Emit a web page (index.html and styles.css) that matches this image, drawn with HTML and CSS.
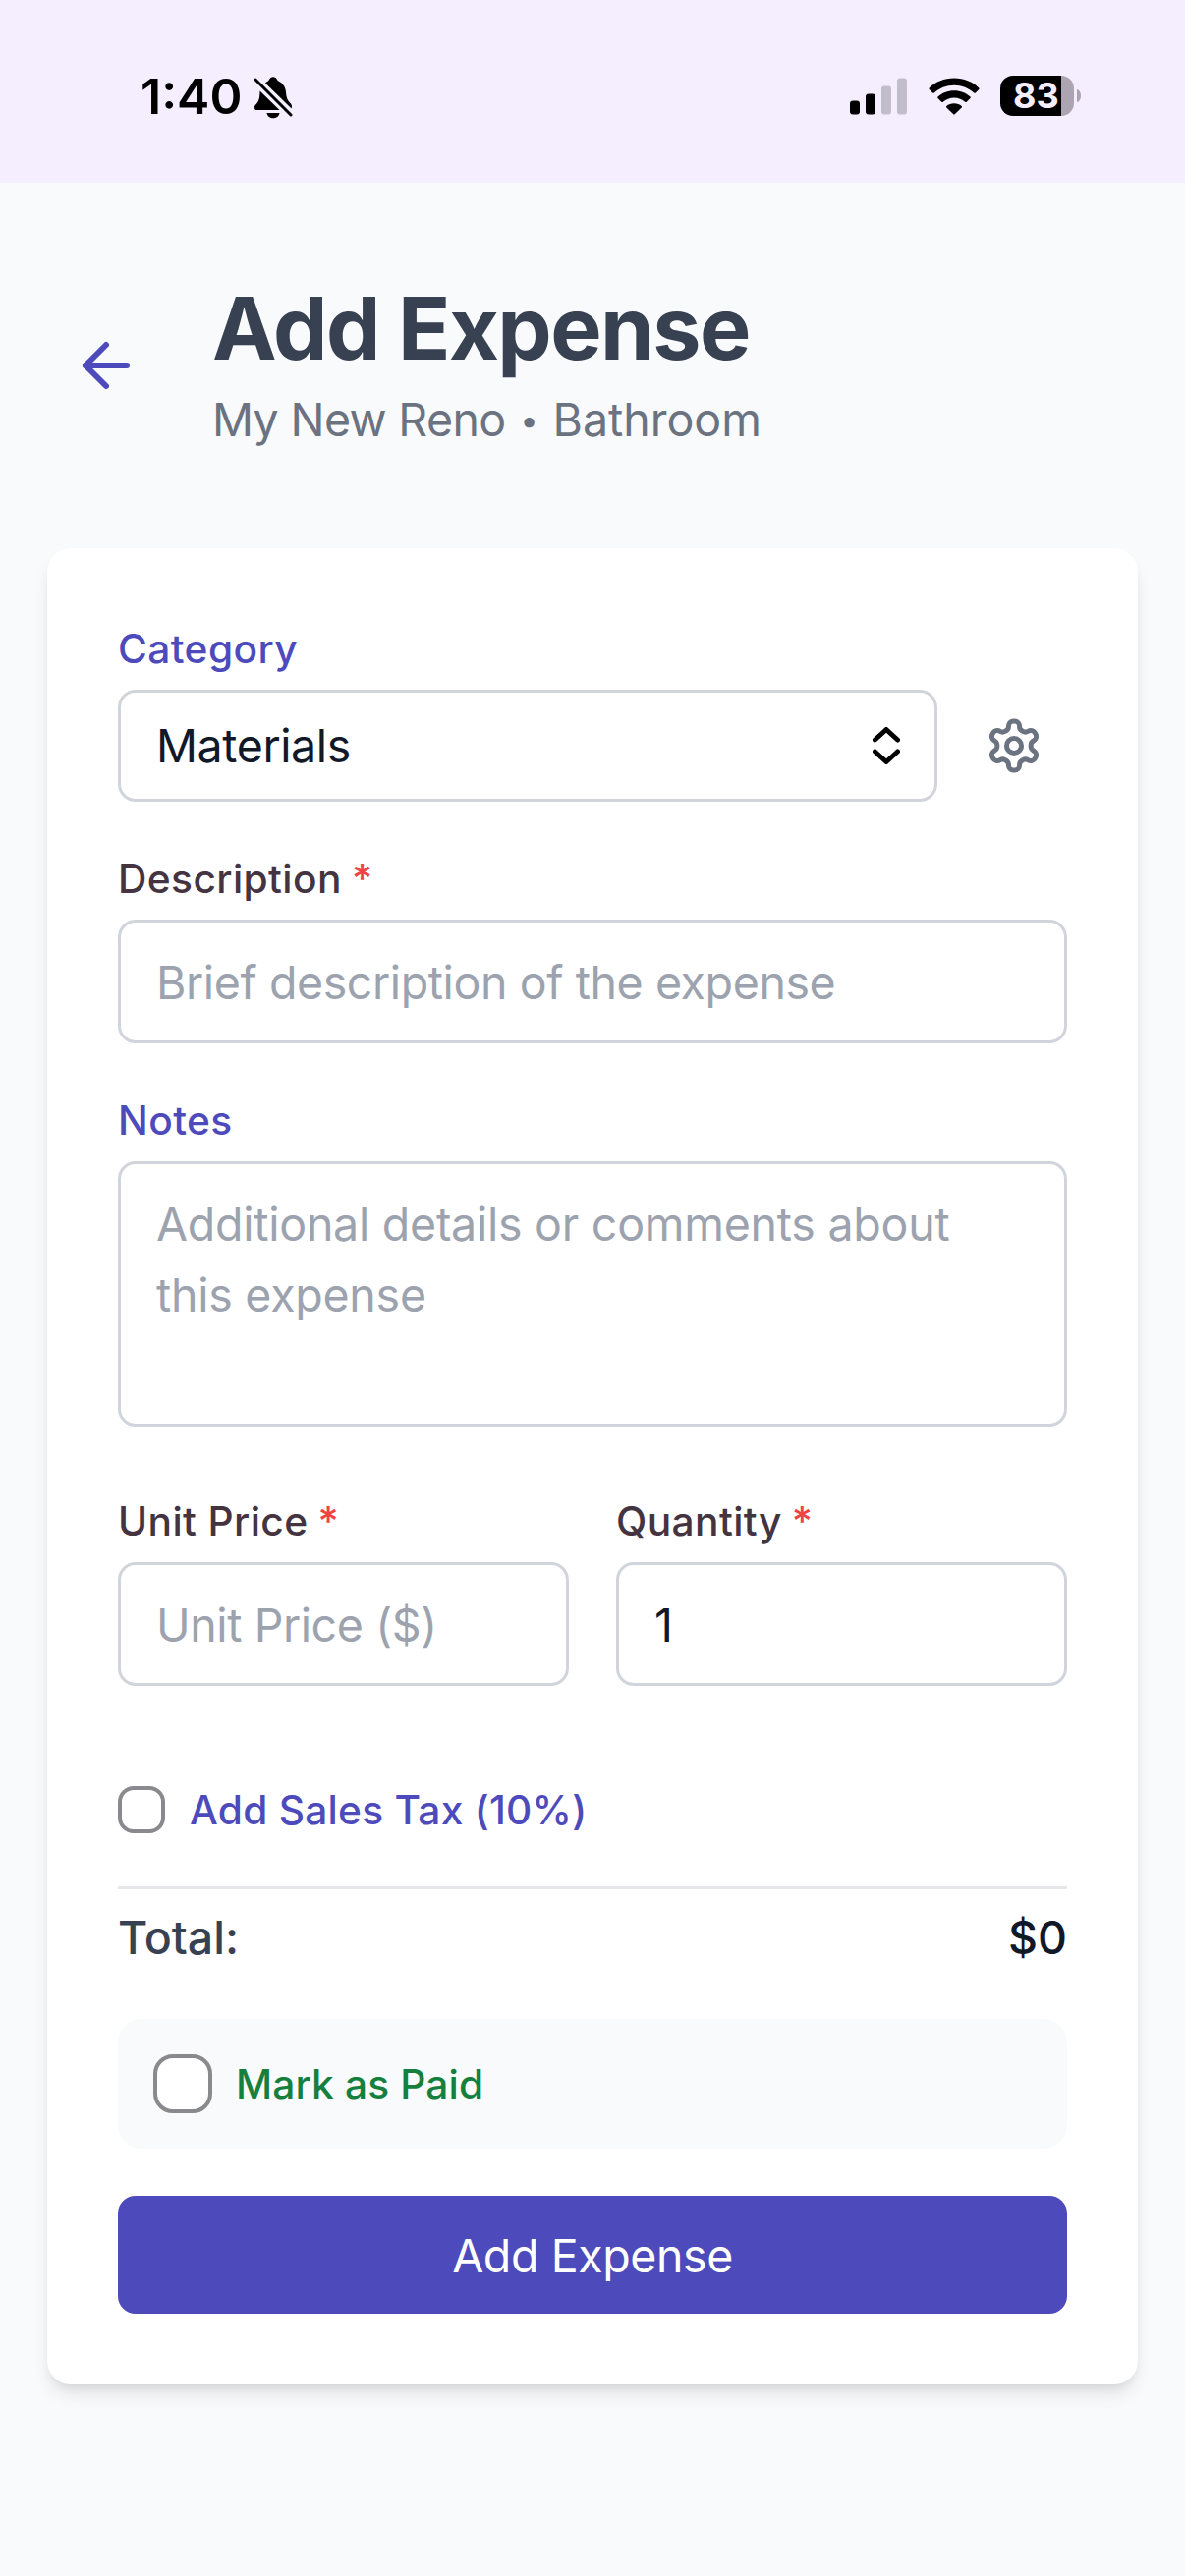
FILE: index.html
```html
<!DOCTYPE html>
<html lang="en">
<head>
<meta charset="utf-8">
<title>Add Expense</title>
<link rel="stylesheet" href="styles.css">
</head>
<body>
<div class="status-bar">
  <div class="status-left">
    <span class="clock">1:40</span>
    <svg class="bell" viewBox="0 0 40 44" width="40" height="44">
      <path d="M6.5 15.5 26.5 35H3.5C.6 35 .2 31.300 2 29.700C5 27 6.500 24 6.500 15.500Z"/>
      <path d="M12 7.500C14.500 5.500 15 5.800 16 4C17.500.4 22.500.4 24 4C24.600 5.500 26 5.600 28 7C34 12 32.500 17 33.800 22C34.500 25 36.300 27 38 28.500C39.200 30 39.200 31.500 38.700 33.500Z"/>
      <path d="M13.500 38H26.500C25.500 45 14.500 45 13.500 38Z"/>
      <path class="slash" d="M2 4 38 40"/>
    </svg>
  </div>
  <div class="status-right">
    <svg class="signal" viewBox="0 0 58 38" width="58" height="38">
      <rect x="0" y="23.500" width="10" height="14" rx="3"/>
      <rect x="16" y="16.500" width="10" height="21" rx="3"/>
      <rect class="dim" x="32" y="8.500" width="10" height="29" rx="3"/>
      <rect class="dim" x="48" y=".5" width="10" height="37" rx="3"/>
    </svg>
    <svg class="wifi" viewBox="0 0 52 38" width="52" height="38">
      <path d="M26 .5C36 .5 45 4.300 51.300 10.500Q52 11.200 51.300 12L47.800 15.500Q47 16.200 46.200 15.500C40.800 10.500 33.800 7.700 26 7.700C18.200 7.700 11.200 10.500 5.800 15.500Q5 16.200 4.200 15.500L.7 12Q0 11.200.7 10.500C7 4.300 16 .5 26 .5Z"/>
      <path d="M26 13.200C32.500 13.200 38.300 15.600 42.500 19.500Q43.200 20.200 42.500 21L38.700 24.700Q38 25.300 37.200 24.700C34.200 22 30.300 20.400 26 20.400C21.700 20.400 17.800 22 14.800 24.700Q14 25.300 13.300 24.700L9.500 21Q8.800 20.200 9.500 19.500C13.700 15.600 19.500 13.200 26 13.200Z"/>
      <path d="M26 26.200C29 26.200 31.700 27.200 33.700 29Q34.400 29.700 33.700 30.400L26.700 37.200Q26 37.900 25.300 37.200L18.300 30.400Q17.600 29.700 18.300 29C20.300 27.200 23 26.200 26 26.200Z"/>
    </svg>
    <div class="battery"><span class="battery-level">83</span></div>
    <div class="battery-cap"></div>
  </div>
</div>

<header class="page-header">
  <svg class="back" viewBox="0 0 24 24" width="72" height="72"><path d="m12 19-7-7 7-7"/><path d="M19 12H5"/></svg>
  <div class="headings">
    <h1 class="title">Add Expense</h1>
    <p class="subtitle"><span class="project">My New Reno</span> <span class="dot">•</span> <span>Bathroom</span></p>
  </div>
</header>

<main class="card">
  <section class="field">
    <div class="label accent"><span>Category</span></div>
    <div class="select-row">
      <div class="control select">
        <span>Materials</span>
        <svg class="chevrons" viewBox="0 0 28 38" width="28" height="38"><path d="M2.500 13 14 2.500 25.500 13M2.500 25 14 35.500 25.500 25"/></svg>
      </div>
      <svg class="gear" viewBox="0 0 24 24" width="60" height="60"><path d="M12.220 2h-.44a2 2 0 0 0-2 2v.18a2 2 0 0 1-1 1.730l-.43.25a2 2 0 0 1-2 0l-.15-.08a2 2 0 0 0-2.730.73l-.22.38a2 2 0 0 0 .73 2.730l.15.1a2 2 0 0 1 1 1.720v.51a2 2 0 0 1-1 1.740l-.15.09a2 2 0 0 0-.73 2.730l.22.38a2 2 0 0 0 2.730.73l.15-.08a2 2 0 0 1 2 0l.43.25a2 2 0 0 1 1 1.730V20a2 2 0 0 0 2 2h.44a2 2 0 0 0 2-2v-.18a2 2 0 0 1 1-1.730l.43-.25a2 2 0 0 1 2 0l.15.08a2 2 0 0 0 2.730-.73l.22-.39a2 2 0 0 0-.73-2.730l-.15-.08a2 2 0 0 1-1-1.740v-.5a2 2 0 0 1 1-1.740l.15-.09a2 2 0 0 0 .73-2.730l-.22-.38a2 2 0 0 0-2.730-.73l-.15.08a2 2 0 0 1-2 0l-.43-.25a2 2 0 0 1-1-1.730V4a2 2 0 0 0-2-2z"/><circle cx="12" cy="12" r="3"/></svg>
    </div>
  </section>

  <section class="field">
    <div class="label"><span>Description</span><span class="required">*</span></div>
    <div class="control input placeholder">Brief description of the expense</div>
  </section>

  <section class="field">
    <div class="label accent"><span>Notes</span></div>
    <div class="control textarea placeholder">Additional details or comments about<br>this expense</div>
  </section>

  <div class="columns">
    <section>
      <div class="label"><span>Unit Price</span><span class="required">*</span></div>
      <div class="control input placeholder">Unit Price ($)</div>
    </section>
    <section>
      <div class="label"><span>Quantity</span><span class="required">*</span></div>
      <div class="control input">1</div>
    </section>
  </div>

  <div class="tax-row">
    <span class="checkbox"></span>
    <span class="check-label accent">Add Sales Tax (10%)</span>
  </div>

  <div class="total-row">
    <span class="total-label">Total:</span>
    <span class="total-value">$0</span>
  </div>

  <div class="paid-row">
    <span class="checkbox large"></span>
    <span class="check-label paid">Mark as Paid</span>
  </div>

  <div class="submit">Add Expense</div>
</main>
</body>
</html>
```
FILE: styles.css
```css
* { box-sizing: border-box; }

body {
  margin: 0;
  min-height: 2622px;
  background: #f9fafc;
  color: #111827;
  font-family: Inter, "Liberation Sans", sans-serif;
  font-size: 46.5px;
  line-height: 72px;
}

.status-bar {
  display: flex;
  justify-content: space-between;
  height: 186px;
  padding: 77px 106px 0 143px;
  background: #f4eefe;
  color: #000;
}
.status-left, .status-right { display: flex; align-items: flex-start; }
.clock {
  width: 115px;
  font-size: 50px;
  font-weight: 600;
  line-height: 42px;
}
.slash { fill: none; stroke: #000; stroke-width: 3; stroke-linecap: round; }
.signal { margin: 2px 22px 0 0; }
.dim { fill: #c2bdcb; }
.wifi { margin: 2px 21px 0 0; }
.battery {
  width: 75px;
  height: 41px;
  padding-left: 13px;
  border-radius: 13px;
  background: linear-gradient(to right, #000 62px, #aca5b1 62px);
  color: #f4eefe;
}
.battery-level {
  display: block;
  font-size: 36px;
  font-weight: 700;
  line-height: 41px;
}
.battery-cap {
  width: 4px;
  height: 13px;
  margin: 14px 0 0 3px;
  border-radius: 0 4px 4px 0 / 0 6.5px 6.5px 0;
  background: #aca5b1;
}

.page-header {
  display: flex;
  align-items: center;
  gap: 72px;
  padding: 94px 72px 95px;
}
.back, .gear {
  fill: none;
  stroke-width: 2;
  stroke-linecap: round;
  stroke-linejoin: round;
}
.back { stroke: #4d4bbb; }
.gear { stroke: #6b7280; }
.title {
  margin: 0 0 3px;
  color: #374151;
  font-size: 88px;
  font-weight: 700;
  line-height: 108px;
  letter-spacing: -1.6px;
}
.subtitle {
  display: flex;
  height: 72px;
  margin: 0;
  color: #6b7280;
}
.project { letter-spacing: -.65px; }
.dot {
  width: 48px;
  padding-top: 1px;
  font-size: 33px;
  text-align: center;
}

.card {
  margin: 0 48px;
  padding: 72px;
  border-radius: 24px;
  background: #fff;
  box-shadow: 0 12px 18px -3px rgba(0, 0, 0, .1), 0 6px 12px -6px rgba(0, 0, 0, .1);
}
.field { margin-bottom: 48px; }
.label {
  display: flex;
  gap: 10px;
  height: 60px;
  margin-bottom: 12px;
  color: #443340;
  font-size: 40.7px;
  font-weight: 500;
  line-height: 61px;
  letter-spacing: .4px;
}
.accent { color: #4d4bbb; }
.required { color: #ef4444; }
.control {
  border: 3px solid #d1d5db;
  border-radius: 18px;
  padding: 0 37px 0 36px;
  letter-spacing: -.4px;
}
.placeholder { color: #9ca3af; }
.select-row { display: flex; align-items: center; gap: 48px; }
.select {
  display: flex;
  justify-content: space-between;
  align-items: center;
  width: 834px;
  height: 114px;
  padding-right: 35px;
  line-height: 74px;
}
.chevrons { fill: none; stroke: #000; stroke-width: 5; stroke-linecap: round; stroke-linejoin: round; }
.input { height: 126px; line-height: 122px; }
.textarea { height: 270px; padding-top: 25px; letter-spacing: -.25px; }
.columns {
  display: grid;
  grid-template-columns: 1fr 1fr;
  gap: 48px;
  margin-top: 66px;
}

.tax-row {
  display: flex;
  align-items: center;
  gap: 25px;
  height: 60px;
  margin: 96px 0 48px;
}
.checkbox {
  width: 48px;
  height: 48px;
  border: 4px solid #8a8a8e;
  border-radius: 16px;
  background: #fff;
}
.checkbox.large { width: 60px; height: 60px; border-radius: 20px; }
.check-label {
  font-size: 40.7px;
  font-weight: 500;
  line-height: 60px;
  padding-top: 1px;
  letter-spacing: .25px;
}
.total-row {
  display: flex;
  justify-content: space-between;
  height: 99px;
  padding-top: 13px;
  border-top: 3px solid #e5e7eb;
  font-weight: 500;
}
.total-label { color: #374151; }
.paid-row {
  display: flex;
  align-items: center;
  gap: 24px;
  height: 132px;
  margin: 36px 0 48px;
  padding: 0 36px;
  border-radius: 24px;
  background: #f9fafb;
}
.paid { color: #15803d; letter-spacing: .15px; }
.submit {
  height: 120px;
  border-radius: 18px;
  background: #4d4bbb;
  color: #fff;
  line-height: 122px;
  letter-spacing: -.4px;
  text-align: center;
}
```
